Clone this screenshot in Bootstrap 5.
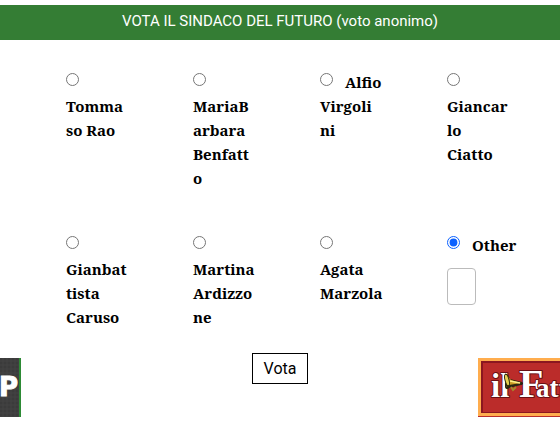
<!DOCTYPE html>
<html lang="it">
<head>
<meta charset="utf-8">
<meta name="viewport" content="width=device-width, initial-scale=1">
<title>Vota il sindaco del futuro</title>
<link href="https://cdn.jsdelivr.net/npm/bootstrap@5.3.0/dist/css/bootstrap.min.css" rel="stylesheet">
<style>
body { font-family: Roboto, sans-serif; color: #000; overflow-x: hidden; }
.poll-title { margin-top: 5px; padding: 4px 16px 7px; background: #347d34; font-size: 15px; line-height: 24px; }
.poll-options { padding: 30px 26px 0; }
.option { padding: 0 0 0 40px; margin-bottom: 43px; font: bold 15px/24px "Noto Serif", "Liberation Serif", serif; }
.last-row { margin-bottom: 24px; }
.option input[type=radio] { width: 13px; height: 13px; margin: 3px 12px 0 0; vertical-align: 2px; accent-color: #0a60ff; }
.other-box { width: 29px; height: 37px; margin-top: 11px; border-color: #bbb; border-radius: 4px; }
.vote-row { display: grid; grid-template-columns: 1fr auto 1fr; }
.vote-btn { padding: 2px 11px; border: 1px solid #000; border-radius: 0; font-size: 16px; line-height: 25px; color: #000; }
.sponsor { height: 59px; margin-top: 5px; }
</style>
</head>
<body>
<h1 class="poll-title text-white text-center fw-normal mb-0">VOTA IL SINDACO DEL FUTURO (voto anonimo)</h1>
<form>
  <div class="poll-options">
    <div class="row g-0">
      <div class="col-3 option"><input type="radio" name="vote" id="v1"><label class="d-inline" for="v1"><br>Tomma<br>so Rao</label></div>
      <div class="col-3 option"><input type="radio" name="vote" id="v2"><label class="d-inline" for="v2"><br>MariaB<br>arbara<br>Benfatt<br>o</label></div>
      <div class="col-3 option"><input type="radio" name="vote" id="v3"><label class="d-inline" for="v3">Alfio<br>Virgoli<br>ni</label></div>
      <div class="col-3 option"><input type="radio" name="vote" id="v4"><label class="d-inline" for="v4"><br>Giancar<br>lo<br>Ciatto</label></div>
      <div class="col-3 option last-row"><input type="radio" name="vote" id="v5"><label class="d-inline" for="v5"><br>Gianbat<br>tista<br>Caruso</label></div>
      <div class="col-3 option last-row"><input type="radio" name="vote" id="v6"><label class="d-inline" for="v6"><br>Martina<br>Ardizzo<br>ne</label></div>
      <div class="col-3 option last-row"><input type="radio" name="vote" id="v7"><label class="d-inline" for="v7"><br>Agata<br>Marzola</label></div>
      <div class="col-3 option last-row text-nowrap"><input type="radio" name="vote" id="v8" checked><label class="d-inline" for="v8">Other</label>
        <input type="text" class="form-control other-box p-1" aria-label="Other">
      </div>
    </div>
  </div>
  <div class="vote-row align-items-start">
    <svg class="sponsor" width="21" height="59" viewBox="0 0 21 59" role="img" aria-label="P">
      <defs><pattern id="weave" width="4" height="4" patternUnits="userSpaceOnUse"><path d="M0 0h4v4H0z" fill="#3b3b3b"/><path d="M0 3h4M3 0v4" stroke="#434343"/></pattern></defs>
      <path d="M0 0h21v59H0z" fill="url(#weave)"/>
      <path d="M19 0h2v59h-2z" fill="#2d8a35"/>
      <text x="-1" y="38" font-family="DejaVu Sans, sans-serif" font-weight="bold" font-size="26" fill="#fff" stroke="#fff">P</text>
    </svg>
    <button type="button" class="btn vote-btn">Vota</button>
    <svg class="sponsor ms-auto" width="82" height="59" viewBox="0 0 82 59" role="img" aria-label="il Fatto">
      <path d="M0 0h82v59H0z" fill="#b92d2b"/>
      <path d="M0 0h82v58H0z" fill="#ffad4e"/>
      <path d="M3 3h79v52H3z" fill="#8b1720"/>
      <path d="M5 5h77v49H5z" fill="#bb2c2a"/>
      <g font-family="Liberation Serif, serif" font-weight="bold" fill="#fff" stroke="#691015" stroke-width="2" paint-order="stroke" stroke-linejoin="round">
        <text x="13" y="39" font-size="33">il</text>
        <text x="41" y="39" font-size="40">F<tspan x="58" font-size="27">att</tspan></text>
      </g>
      <path d="M27 16c2-1 4 2 5 5l12 3c2 1 1 3-1 3l-12 3c-1 2-4 1-4-1z" fill="#2b2511"/>
      <path d="M29 17l4 5 10 3-12 2-3 2c3-4 3-8 1-12z" fill="#c99c25"/>
      <path d="M32 23l10 2" stroke="#fff08a" stroke-width="1.5"/>
      <ellipse cx="29" cy="22" rx="2" ry="6" fill="#e6cf51" stroke="#30280d" transform="rotate(-14 29 22)"/>
      <path d="M33 29l2 3 3-3" fill="none" stroke="#a6892c" stroke-width="2"/>
    </svg>
  </div>
</form>
<script src="https://cdn.jsdelivr.net/npm/bootstrap@5.3.0/dist/js/bootstrap.bundle.min.js"></script>
</body>
</html>
